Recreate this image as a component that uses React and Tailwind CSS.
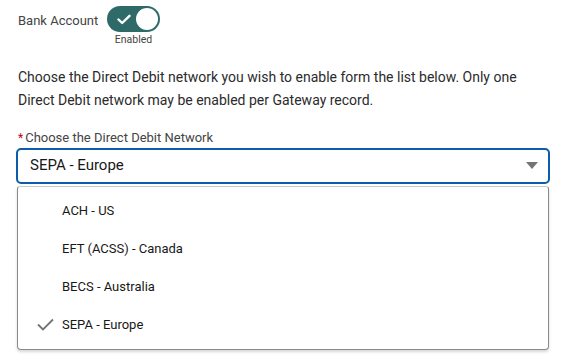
import React from "react";

const options = ["ACH - US", "EFT (ACSS) - Canada", "BECS - Australia", "SEPA - Europe"];

export default function App() {
  const selected = "SEPA - Europe";

  return (
    <div className="w-[562px] h-[363px] bg-white font-['Roboto',sans-serif] text-[#181818] pt-[6px]">
      <div className="flex items-start pl-[18px]">
        <span className="text-[13px] text-[#444444] mt-[5px] w-[89px]">Bank Account</span>
        <div className="flex flex-col items-center">
          <div className="w-[53px] h-[26px] rounded-full bg-[#2e6b68] flex items-center justify-between pl-[10px] pr-[2px]">
            <svg width="14" height="11" viewBox="0 0 14 11" fill="none">
              <path d="M1.5 5.5 L5.2 9 L12.5 1.8" stroke="white" strokeWidth="2.4" strokeLinecap="round" strokeLinejoin="round" />
            </svg>
            <div className="w-[22px] h-[22px] rounded-full bg-white" />
          </div>
          <span className="text-[10.5px] text-[#444444] leading-none mt-[3px]">Enabled</span>
        </div>
      </div>

      <p className="mx-[18px] mt-[20px] text-[14px] leading-[23px] text-[#2b2b2b]">
        Choose the Direct Debit network you wish to enable form the list below. Only one Direct Debit network may be enabled per Gateway record.
      </p>

      <div className="ml-[16px] mr-[12px] mt-[17px]">
        <div className="text-[13px] text-[#444444] pl-[2px] leading-[18px] flex items-center">
          <span className="text-[#ba0517] mr-[2px] text-[12px]">*</span>
          Choose the Direct Debit Network
        </div>
        <div className="mt-[1px] h-[36px] border-2 border-[#0b5cab] rounded-[5px] flex items-center justify-between pl-[12px] pr-[10px]">
          <span className="text-[15px] text-[#181818]">{selected}</span>
          <svg width="12" height="8" viewBox="0 0 12 8">
            <path d="M0 0 H12 L6 7 Z" fill="#747474" />
          </svg>
        </div>
        <div className="mt-[2px] mx-[1px] border border-[#c9c9c9] border-l-[#8a8a8a] border-r-[#8a8a8a] border-b-[#8a8a8a] rounded-b-[4px] rounded-t-[3px] shadow-[0_2px_3px_rgba(0,0,0,0.16)] py-[5px]">
          {options.map((o) => (
            <div key={o} className="h-[38px] flex items-center">
              <div className="w-[44px] flex justify-end pr-[8px]">
                {o === selected && (
                  <svg width="17" height="13" viewBox="0 0 17 13" fill="none">
                    <path d="M1 6.5 L6 11.5 L16 1.5" stroke="#747474" strokeWidth="1.8" />
                  </svg>
                )}
              </div>
              <span className="text-[13px] text-[#181818]">{o}</span>
            </div>
          ))}
        </div>
      </div>
    </div>
  );
}
